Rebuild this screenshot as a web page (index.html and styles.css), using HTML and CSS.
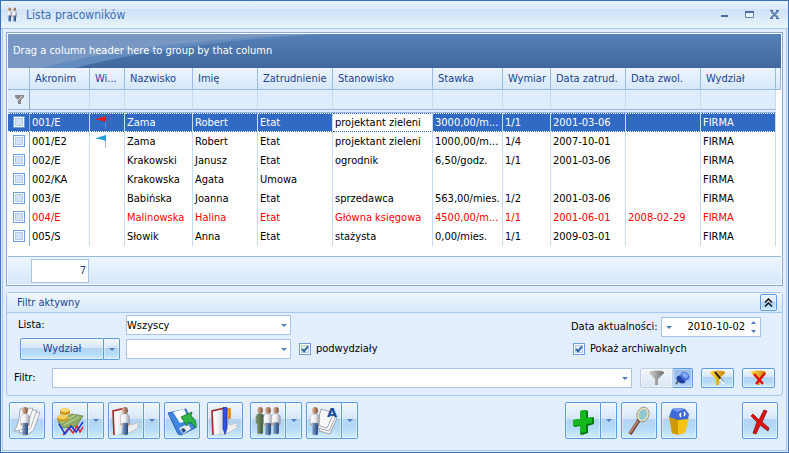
FILE: index.html
```html
<!DOCTYPE html>
<html lang="pl">
<head>
    <meta charset="UTF-8">
    <title>Lista pracowników</title>
    <link rel="stylesheet" href="styles.css">
</head>
<body>
<!-- shared shapes -->
<svg class="defs" width="0" height="0" aria-hidden="true">
    <defs>
        <linearGradient id="shirt"><stop offset="0" stop-color="#fff"/><stop offset=".5" stop-color="#eef0f4"/><stop offset="1" stop-color="#979daa"/></linearGradient>
        <linearGradient id="jeans"><stop offset="0" stop-color="#86a3c8"/><stop offset="1" stop-color="#23467c"/></linearGradient>
        <linearGradient id="skin"><stop offset="0" stop-color="#e3bd9e"/><stop offset="1" stop-color="#7a4c32"/></linearGradient>
        <linearGradient id="green"><stop offset="0" stop-color="#7d9670"/><stop offset="1" stop-color="#43583c"/></linearGradient>
        <linearGradient id="gold"><stop offset="0" stop-color="#ffd84a"/><stop offset="1" stop-color="#c98200"/></linearGradient>
        <linearGradient id="steel"><stop offset="0" stop-color="#d4d4d4"/><stop offset="1" stop-color="#6e6e6e"/></linearGradient>
        <linearGradient id="page"><stop offset="0" stop-color="#fff"/><stop offset="1" stop-color="#b9c0c8"/></linearGradient>
    </defs>
    <symbol id="person" viewBox="0 0 10 30">
        <path d="M2.500 16h5.500v12l-2 1.500-1-1-2 .5-.8-1z" fill="url(#jeans)"/>
        <path d="M2 8.500q3-2 6 0l1.500 2v8l-1.500.5v-2h-6v1.500l-1.500-.5v-7z" fill="url(#shirt)" stroke="#8e95a2" stroke-width=".4"/>
        <path d="M.700 17.500h1.300v2h-1.300zM8 18h1.300v2h-1.300z" fill="#c99a78"/>
        <ellipse cx="5" cy="4.500" rx="2.900" ry="3.400" fill="url(#skin)"/>
    </symbol>
    <symbol id="soldier" viewBox="0 0 10 30">
        <path d="M2 16h6v12l-2 1.500-1-1-2 .5-.8-1z" fill="url(#green)"/>
        <path d="M2 8.500q3-2 6 0l1.500 2v8l-1.500.5v-2h-6v1.500l-1.500-.5v-7z" fill="url(#green)"/>
        <ellipse cx="5" cy="4.500" rx="2.900" ry="3.400" fill="url(#skin)"/>
    </symbol>
    <symbol id="book" viewBox="0 0 30 30">
        <path d="M15 14l5 5 9-3-3 4 3 1-9 5-10 3z" fill="#eceef0" stroke="#a9b0b8" stroke-width=".6"/>
        <path d="M2 5l13-3v20L3 29z" fill="#f4f4f4"/>
        <path d="M15 2L2 5l1 24" fill="none" stroke="#a3262b" stroke-width="1.600"/>
        <path d="M5 6l10-3 3 12-1 8-12 6z" fill="url(#page)"/>
        <path d="M15 3l4 14-5 8" fill="none" stroke="#a9b0b8" stroke-width=".8"/>
    </symbol>
    <symbol id="funnel" viewBox="0 0 16 16">
        <path d="M0 3l6 6v6h3v-6l6-6z"/>
        <ellipse cx="7.500" cy="2.500" rx="7.500" ry="2"/>
    </symbol>
</svg>

<div class="window">
    <div class="titlebar">
        <svg class="logo" width="10" height="15" viewBox="0 0 10 15">
            <use href="#person" x="0" y="0" width="5" height="15"/>
            <use href="#person" x="5" y="0" width="5" height="15"/>
        </svg>
        <h1>Lista pracowników</h1>
        <button type="button" aria-label="Minimalizuj"><svg width="9" height="9" viewBox="0 0 9 9"><path d="M1 5h7v2H1z" fill="#4b6c9e"/></svg></button>
        <button type="button" aria-label="Maksymalizuj"><svg width="9" height="9" viewBox="0 0 9 9"><path d="M.5 1.500h8v6h-8z" fill="#eaf3fd" stroke="#6785b3"/><path d="M0 1h9v2H0z" fill="#4b6c9e"/></svg></button>
        <button type="button" aria-label="Zamknij"><svg width="9" height="9" viewBox="0 0 9 9"><path d="M1 1l7 7M8 1L1 8" stroke="#6482b0" stroke-width="2"/><path d="M0 .5h3M6 .5h3M0 8.500h3M6 8.500h3" stroke="#4b6c9e"/></svg></button>
    </div>

    <div class="content">
        <div class="grid">
            <div class="groupbar">
                <svg class="swoosh" width="340" height="34" viewBox="0 0 340 34">
                    <path d="M0 0h320Q170 8 67 34H0z" fill="#648bbd"/>
                    <path d="M0 0h310Q130 7 34 34H0z" fill="#7898c3"/>
                </svg>
                <span>Drag a column header here to group by that column</span>
            </div>
            <table>
                <colgroup>
                    <col class="w-check"><col class="w-akronim"><col class="w-flag"><col class="w-nazwisko"><col class="w-imie"><col class="w-date"><col class="w-stan"><col class="w-stawka"><col class="w-wymiar"><col class="w-date"><col class="w-date"><col><col class="w-end">
                </colgroup>
                <thead>
                    <tr class="head">
                        <th></th><th>Akronim</th><th>Wi...</th><th>Nazwisko</th><th>Imię</th><th>Zatrudnienie</th><th>Stanowisko</th><th>Stawka</th><th>Wymiar</th><th>Data zatrud.</th><th>Data zwol.</th><th>Wydział</th><th></th>
                    </tr>
                    <tr class="filter">
                        <td><svg width="9" height="9" viewBox="0 0 9 9"><path d="M0 0h9v2L6 5v4H3V5L0 2z" fill="#8c8c8c"/><path d="M1 7l6-6" stroke="#e4e4e4"/></svg></td>
                        <td></td><td></td><td></td><td></td><td></td><td></td><td></td><td></td><td></td><td></td><td></td><td></td>
                    </tr>
                    <tr class="split-line"><td colspan="12"></td><td></td></tr>
                </thead>
                <tbody>
                    <tr class="selected">
                        <td><input type="checkbox" aria-label="001/E"></td><td>001/E</td>
                        <td class="flag"><svg width="12" height="13" viewBox="0 0 12 13"><path d="M10.500 0v13" stroke="#8d7c94"/><path d="M11 0v6L6 4.500 0 3.500 6 1.500z" fill="#e01b1b"/></svg></td>
                        <td>Zama</td><td>Robert</td><td>Etat</td><td class="focused">projektant zieleni</td><td>3000,00/m...</td><td>1/1</td><td>2001-03-06</td><td></td><td>FIRMA</td><td></td>
                    </tr>
                    <tr>
                        <td><input type="checkbox" aria-label="001/E2"></td><td>001/E2</td>
                        <td class="flag"><svg width="12" height="13" viewBox="0 0 12 13"><path d="M10.500 0v13" stroke="#b4b4b4"/><path d="M11 0v6L6 4.500 0 3.500 6 1.500z" fill="#2a9ddb"/></svg></td>
                        <td>Zama</td><td>Robert</td><td>Etat</td><td>projektant zieleni</td><td>1000,00/m...</td><td>1/4</td><td>2007-10-01</td><td></td><td>FIRMA</td><td></td>
                    </tr>
                    <tr>
                        <td><input type="checkbox" aria-label="002/E"></td><td>002/E</td><td></td><td>Krakowski</td><td>Janusz</td><td>Etat</td><td>ogrodnik</td><td>6,50/godz.</td><td>1/1</td><td>2001-03-06</td><td></td><td>FIRMA</td><td></td>
                    </tr>
                    <tr>
                        <td><input type="checkbox" aria-label="002/KA"></td><td>002/KA</td><td></td><td>Krakowska</td><td>Agata</td><td>Umowa</td><td></td><td></td><td></td><td></td><td></td><td>FIRMA</td><td></td>
                    </tr>
                    <tr>
                        <td><input type="checkbox" aria-label="003/E"></td><td>003/E</td><td></td><td>Babińska</td><td>Joanna</td><td>Etat</td><td>sprzedawca</td><td>563,00/mies.</td><td>1/2</td><td>2001-03-06</td><td></td><td>FIRMA</td><td></td>
                    </tr>
                    <tr class="archived">
                        <td><input type="checkbox" aria-label="004/E"></td><td>004/E</td><td></td><td>Malinowska</td><td>Halina</td><td>Etat</td><td>Główna księgowa</td><td>4500,00/m...</td><td>1/1</td><td>2001-06-01</td><td>2008-02-29</td><td>FIRMA</td><td></td>
                    </tr>
                    <tr>
                        <td><input type="checkbox" aria-label="005/S"></td><td>005/S</td><td></td><td>Słowik</td><td>Anna</td><td>Etat</td><td>stażysta</td><td>0,00/mies.</td><td>1/1</td><td>2009-03-01</td><td></td><td>FIRMA</td><td></td>
                    </tr>
                </tbody>
            </table>
            <div class="summary"><span>7</span></div>
        </div>

        <form class="panel">
            <div class="panel-head">
                <span>Filtr aktywny</span>
                <button type="button" class="btn collapse" aria-label="Zwiń"><svg width="9" height="9" viewBox="0 0 9 9"><path d="M1 4.500l3.500-3.500L8 4.500M1 8.500L4.500 5 8 8.500" fill="none" stroke="#111" stroke-width="1.500"/></svg></button>
            </div>
            <div class="fields">
                <div class="left">
                    <label for="lista">Lista:</label>
                    <div class="combo"><select id="lista"><option>Wszyscy</option></select></div>
                    <span></span>
                    <div class="split small">
                        <button type="button" class="btn">Wydział</button><button type="button" class="btn drop" aria-label="Wybierz"></button>
                    </div>
                    <div class="combo"><select aria-label="Wydział"><option></option></select></div>
                    <label class="check"><input type="checkbox" checked>podwydziały</label>
                </div>
                <div class="right">
                    <div class="date-row">
                        <label for="data">Data aktualności:</label>
                        <div class="date">
                            <input id="data" type="text" value="2010-10-02">
                            <svg width="5" height="12" viewBox="0 0 5 12"><path d="M0 3h5L2.500 0zM0 9h5l-2.500 3z" fill="#4f7fbf"/></svg>
                        </div>
                    </div>
                    <label class="check"><input type="checkbox" checked>Pokaż archiwalnych</label>
                </div>
            </div>
            <div class="filter-row">
                <label for="filtr">Filtr:</label>
                <div class="combo wide"><input id="filtr" type="text"></div>
                <div class="split funnels">
                    <button type="button" class="btn flat" aria-label="Filtruj"><svg width="16" height="16" fill="url(#steel)"><use href="#funnel"/></svg></button><button type="button" class="btn pressed" aria-label="Przypnij"><svg width="15" height="14" viewBox="0 0 15 14"><path d="M4 9l-3 4" stroke="#555" stroke-width="1.500"/><ellipse cx="6" cy="8.500" rx="5" ry="3.500" transform="rotate(35 6 8.500)" fill="#1f429c"/><path d="M5 5l4-3 5 6-5 2z" fill="#3a66cc"/><ellipse cx="10" cy="5" rx="4.800" ry="3.800" transform="rotate(35 10 5)" fill="#4876dc"/><ellipse cx="10" cy="4.200" rx="3.200" ry="2.200" transform="rotate(35 10 4.200)" fill="#86a9f2"/></svg></button>
                </div>
                <button type="button" class="btn tool" aria-label="Kreator filtra"><svg width="16" height="16"><use href="#funnel" fill="url(#gold)"/><path d="M5 2l8 10" stroke="#222" stroke-width="2"/><path d="M10 9l4 5" stroke="#fff" stroke-width="2"/></svg></button>
                <button type="button" class="btn tool" aria-label="Wyczyść filtr"><svg width="16" height="16"><use href="#funnel" fill="url(#gold)"/><path d="M3 4l9 10M14 3L5 14" stroke="#e01010" stroke-width="2.500"/></svg></button>
            </div>
        </form>

        <div class="toolbar">
            <button type="button" class="btn big" aria-label="Lista pracowników">
                <svg width="30" height="30" viewBox="0 0 30 30">
                    <g fill="#f6f7f8" stroke="#8d9298" stroke-width=".7"><path d="M15 7l13-1-6 17q-4 6-11 6z"/><path d="M12 5l13-1-6 17q-4 6-12 6z"/><path d="M8 3l13-1-5 16q-4 7-14 7 5-6 6-22z"/></g>
                    <use href="#person" x="8" y="0" width="10" height="30"/>
                </svg>
            </button>
            <div class="split">
                <button type="button" class="btn big" aria-label="Wypłaty">
                    <svg width="30" height="30" viewBox="0 0 30 30">
                        <path d="M3 15l14-7 11 2-7 11-15 1z" fill="#8dab62" stroke="#5c7a3a" stroke-width=".7"/>
                        <path d="M6 17l14-8M9 19l15-8" stroke="#c9d9a4"/>
                        <path d="M2 11v3q6 3 11 0v-3zM5 4v4q5 2 10 0v-4z" fill="#c99a1c"/>
                        <ellipse cx="7.500" cy="11" rx="5.500" ry="2.200" fill="#f2d060"/><ellipse cx="10" cy="4" rx="4.500" ry="2.200" fill="#f6d970"/>
                        <path d="M8 29l6-7 4 5 4-7 3 6 3-5" fill="none" stroke="#e32020" stroke-width="1.500"/>
                        <path d="M4 18l6 10 6-8 5 6 7-10" fill="none" stroke="#2036d8" stroke-width="1.500"/>
                    </svg>
                </button><button type="button" class="btn drop" aria-label="Więcej"></button>
            </div>
            <div class="split">
                <button type="button" class="btn big" aria-label="Kartoteka">
                    <svg width="30" height="30"><use href="#book" width="30" height="30"/><use href="#person" x="9" y="0" width="10" height="30"/></svg>
                </button><button type="button" class="btn drop" aria-label="Więcej"></button>
            </div>
            <button type="button" class="btn big" aria-label="Zapisz">
                <svg width="30" height="30" viewBox="0 0 30 30">
                    <path d="M1 7l18-4 9 19-14 7-3-1z" fill="#3f86e0" stroke="#1c50a6" stroke-width=".8"/>
                    <path d="M6 6l11-3 5 11-9 3z" fill="#fbfcfd"/>
                    <path d="M12 22l9-4 3 5-8 5z" fill="#e6ebf2"/><path d="M14 23l3-1 2 3-3 2z" fill="#2b4f86"/>
                    <path d="M14 11l11-5-1 4q6 4 5 12-4-6-8-6l-1 4z" fill="#2db547" stroke="#0e6f25" stroke-width=".8"/>
                </svg>
            </button>
            <button type="button" class="btn big spaced" aria-label="Notatnik">
                <svg width="30" height="30"><use href="#book" width="30" height="30"/><path d="M16 3h4v9h-2" fill="#f9a13a" stroke="#e0760f" stroke-width="1.500"/><path d="M13 1.500h4v21l-2 6-2-6z" fill="#2f50e0" stroke="#162a90" stroke-width=".6"/></svg>
            </button>
            <div class="split spaced">
                <button type="button" class="btn big" aria-label="Grupy">
                    <svg width="30" height="30"><use href="#soldier" x="2" y="0" width="10" height="29"/><use href="#person" x="10" y="0" width="10" height="30"/><use href="#person" x="18" y="0" width="10" height="29"/></svg>
                </button><button type="button" class="btn drop" aria-label="Więcej"></button>
            </div>
            <div class="split">
                <button type="button" class="btn big" aria-label="Wydruki">
                    <svg width="30" height="30" viewBox="0 0 30 30">
                        <g fill="#f7f8f9" stroke="#8d9298" stroke-width=".8"><path d="M15 8l13 4-7 16-11-3z"/><path d="M13 6l14 4-7 15-11-3z"/><path d="M12 3l13 4-7 15-10-3z"/></g>
                        <use href="#person" x="1" y="0" width="10" height="30"/>
                        <text class="letter" x="18" y="11">A</text>
                    </svg>
                </button><button type="button" class="btn drop" aria-label="Więcej"></button>
            </div>

            <div class="split end">
                <button type="button" class="btn big" aria-label="Dodaj">
                    <svg width="30" height="30" viewBox="0 0 30 30"><path d="M12 5l6-1 2 1v7l5-1 1 1v6l-6 2v7l-6 2-2-1v-8l-5 1-2-1v-6l7-1z" fill="#067a10"/><path d="M12 5l6-1v8l6-1v6l-6 1v8l-6 1v-8l-7 1v-6l7-1z" fill="#14b81d"/></svg>
                </button><button type="button" class="btn drop" aria-label="Więcej"></button>
            </div>
            <button type="button" class="btn big" aria-label="Szukaj">
                <svg width="30" height="30" viewBox="0 0 30 30"><path d="M15 14L6 28" stroke="#6e3d2c" stroke-width="3.500"/><path d="M14 15L6 27" stroke="#c08d78" stroke-width="1.500"/><ellipse cx="19" cy="8.500" rx="5" ry="6.500" transform="rotate(20 19 8.500)" fill="#8fc9ce" stroke="#e9dfb8" stroke-width="2"/><ellipse cx="19" cy="8.500" rx="6" ry="7.500" transform="rotate(20 19 8.500)" fill="none" stroke="#7a705a" stroke-width=".6"/></svg>
            </button>
            <button type="button" class="btn big" aria-label="Kosz">
                <svg width="30" height="30" viewBox="0 0 30 30"><path d="M5 11l20 1-4 15-7 2-6-2z" fill="#f5c413"/><path d="M5 11l9 2v16l-6-2z" fill="#cf9a05"/><path d="M8 3q6-2 13 0l4 5-1 5-10 1-9-3z" fill="#3f68d8"/><path d="M8 3q6-2 13 0l-8 3z" fill="#7d9cf0"/><path d="M17 7q-2 2 0 4M20 6q2 2 0 4" fill="none" stroke="#fff" stroke-width="1.500"/></svg>
            </button>
            <button type="button" class="btn big close" aria-label="Zamknij okno">
                <svg width="30" height="30" viewBox="0 0 30 30"><path d="M6 10l2-2 6 6 5-10 3 1-5 11 7 6-1 3-8-6-4 9-3-1 4-11z" fill="#e01313" stroke="#8f0b0b" stroke-width=".8"/></svg>
            </button>
        </div>
    </div>
</div>
</body>
</html>
```
FILE: styles.css
```css
* {
    box-sizing: border-box;
}
body {
    margin: 0;
    font-family: "DejaVu Sans Condensed", "DejaVu Sans", sans-serif;
    font-size: 11px;
    line-height: 14px;
    color: #000;
}
svg {
    display: block;
}
.defs {
    position: absolute;
}
button, input, select {
    font: inherit;
    color: inherit;
    margin: 0;
    padding: 0;
}

/* window */
.window {
    min-height: 100vh;
    border: 1px solid #3d72b4;
    padding: 0 1px 1px;
    background: #e3efff;
}
.titlebar {
    display: flex;
    align-items: center;
    height: 28px;
    margin: 0 -1px;
    padding: 0 9px 0 6px;
    border-bottom: 1px solid #a6c8f0;
    background: linear-gradient(#e6f1fd 0, #dceafa 8px, #cde1f7 8px, #eaf4fd 100%);
}
.titlebar h1 {
    flex: 1;
    margin: 0 0 0 9px;
    font-size: 12px;
    font-weight: normal;
    color: #3e6db5;
}
.titlebar button {
    margin-left: 16px;
    border: 0;
    background: none;
}
.content {
    min-height: calc(100vh - 31px);
    padding: 3px 3px 11px;
    border: 1px solid #a6c8f0;
    border-top: 0;
}

/* employee grid */
.grid {
    padding: 1px;
    border: 1px solid #8ba9d3;
    background: #fff;
}
.groupbar {
    position: relative;
    height: 34px;
    padding: 10px 5px;
    background: linear-gradient(#5581b7, #42689d);
    color: #fff;
}
.groupbar span {
    position: relative;
}
.swoosh {
    position: absolute;
    left: 0;
    top: 0;
}
table {
    width: 100%;
    table-layout: fixed;
    border-collapse: separate;
    border-spacing: 0;
}
.w-check { width: 22px; }
.w-akronim { width: 60px; }
.w-flag { width: 35px; }
.w-nazwisko { width: 68px; }
.w-imie { width: 65px; }
.w-date { width: 75px; }
.w-stan { width: 100px; }
.w-stawka { width: 70px; }
.w-wymiar { width: 48px; }
.w-end { width: 5px; }

th, td {
    padding: 0 0 0 2px;
    border-right: 1px solid #c9dbf1;
    text-align: left;
    white-space: nowrap;
    overflow: hidden;
}
th:first-child, td:first-child {
    padding: 0 0 1px 5px;
    border-right-color: #8ba9d3;
}
td:last-child {
    border-right: 0;
}
.head th {
    height: 22px;
    padding-left: 5px;
    border-right: 1px solid #9ab9e0;
    border-bottom: 1px solid #9ab9e0;
    background: linear-gradient(#edf5fe, #d6e8fb);
    font-weight: normal;
    color: #1d428f;
}
.head th:last-child {
    padding: 0;
}
.filter td {
    height: 20px;
    border-bottom: 1px solid #9ab9e0;
    background: #e0edfe;
}
.filter td:first-child {
    padding-left: 7px;
}
.filter td:last-child, .split-line td:last-child {
    padding: 0;
    border: 0;
    background: #fff;
}
.split-line td {
    height: 3px;
    padding: 0;
    border: 0;
    border-bottom: 1px solid #9ab9e0;
    background: #e0edfe;
}
tbody td {
    height: 19px;
}
tbody input {
    display: block;
}
.flag {
    padding-left: 5px;
}
.selected td {
    border-top: 1px dotted #fff;
    border-bottom: 1px dotted #fff;
    background: #316ac5;
    color: #fff;
}
.selected td.focused {
    border-top-color: #316ac5;
    border-bottom-color: #316ac5;
    background: #fff;
    color: #000;
}
.selected td:last-child {
    border: 0;
    background: #fff;
}
.archived {
    color: #f00;
}
.summary {
    height: 28px;
    margin-top: 10px;
    padding: 2px 0 0 23px;
    border-top: 1px solid #9ab9e0;
    background: linear-gradient(#edf5fe, #d6e8fb);
}
.summary span {
    display: block;
    width: 58px;
    height: 24px;
    padding: 4px 2px;
    border: 1px solid #a9c4e6;
    background: #fff;
    text-align: right;
    color: #1d428f;
}

/* check boxes */
input[type="checkbox"] {
    appearance: none;
    width: 12px;
    height: 12px;
    border: 1px solid #6f9fd8;
    background: #d3e2f6;
    box-shadow: inset 0 0 0 1px #fff, inset 0 0 0 2px #b3cbe8;
}
input[type="checkbox"]:checked {
    background: #e8f1fb;
}
input[type="checkbox"]:checked::before {
    content: "";
    display: block;
    width: 2px;
    height: 5px;
    margin: 1px 0 0 3px;
    border: solid #2f65b0;
    border-width: 0 2px 2px 0;
    transform: rotate(40deg);
}
.check {
    display: flex;
    align-items: center;
    gap: 5px;
}

/* buttons */
.btn {
    display: flex;
    align-items: center;
    justify-content: center;
    border: 1px solid #5b9be2;
    border-radius: 2px;
    background: linear-gradient(#f1f7fe 0, #d5e6f9 45%, #b5d3f4 46%, #b4dcf8 75%, #d3edfd 100%);
    box-shadow: inset 0 0 0 1px rgba(255, 255, 255, .4);
}
.split {
    display: flex;
}
.split .btn:first-child {
    border-radius: 2px 0 0 2px;
}
.split .btn:last-child {
    border-left: 0;
    border-radius: 0 2px 2px 0;
}
.drop {
    width: 16px;
}
.drop::before, .combo::after, .date::before {
    content: "";
    border: 3px solid transparent;
    border-top-color: #4f7fbf;
    border-bottom: 0;
}

/* filter panel */
.panel {
    margin-top: 6px;
    border: 1px solid #a6c8f0;
    border-radius: 3px;
}
.panel-head {
    display: flex;
    align-items: center;
    justify-content: space-between;
    height: 20px;
    padding: 0 5px 0 10px;
    border-bottom: 1px solid #a6c8f0;
    background: linear-gradient(#eff6fe, #d8e9fc);
    color: #1d428f;
}
.collapse {
    width: 17px;
    height: 17px;
}
.fields {
    display: flex;
    justify-content: space-between;
    padding: 2px 21px 0 13px;
}
.left {
    display: grid;
    grid-template-columns: 100px 165px auto;
    grid-template-rows: 20px 22px;
    gap: 3px 6px;
    align-items: center;
}
.left > label:first-child {
    margin-left: -2px;
}
.left .check {
    margin-left: 2px;
}
.small .btn {
    height: 22px;
    color: #1d428f;
}
.small .btn:first-child {
    width: 84px;
}
.combo {
    position: relative;
}
.combo::after {
    position: absolute;
    right: 4px;
    top: 9px;
    pointer-events: none;
}
.combo select, .combo input {
    display: block;
    appearance: none;
    width: 100%;
    height: 20px;
    padding: 1px 14px 0 2px;
    border: 1px solid #a9c4e6;
    border-radius: 0;
    background: #fff;
}
.combo select {
    padding-left: 0;
}
.right {
    display: grid;
    gap: 5px;
    align-content: start;
    width: 190px;
    padding-top: 2px;
}
.date-row {
    display: flex;
    align-items: center;
    justify-content: space-between;
}
.right .check {
    padding-left: 2px;
}
.date {
    display: flex;
    align-items: center;
    width: 100px;
    height: 20px;
    padding: 0 4px;
    border: 1px solid #a9c4e6;
    background: #fff;
}
.date input {
    flex: 1;
    min-width: 0;
    margin-right: 6px;
    border: 0;
    text-align: right;
}
.filter-row {
    display: flex;
    align-items: center;
    gap: 8px;
    padding: 8px 7px 7px;
}
.filter-row label {
    width: 30px;
}
.wide {
    flex: 1;
}
.funnels .btn, .tool {
    width: 33px;
    height: 20px;
}
.funnels .btn:last-child {
    width: 20px;
}
.btn.flat {
    border-color: #bcd0e8;
    background: linear-gradient(#f2f6fb, #dbe6f3);
}
.btn.pressed {
    border: 1px solid #5b9be2;
    background: linear-gradient(#93b9ea, #b5d5f7);
}

/* bottom toolbar */
.toolbar {
    display: flex;
    gap: 4px;
    margin-top: 6px;
    padding: 0 5px 0 3px;
}
.toolbar .btn {
    height: 37px;
}
.big {
    width: 36px;
}
.toolbar > .btn:first-child {
    margin-right: 3px;
}
.spaced {
    margin-left: 3px;
}
.end {
    margin-left: auto;
}
.close {
    margin-left: 41px;
}
.letter {
    font: bold 13px "DejaVu Sans", sans-serif;
    fill: #1a4f9c;
}
```
